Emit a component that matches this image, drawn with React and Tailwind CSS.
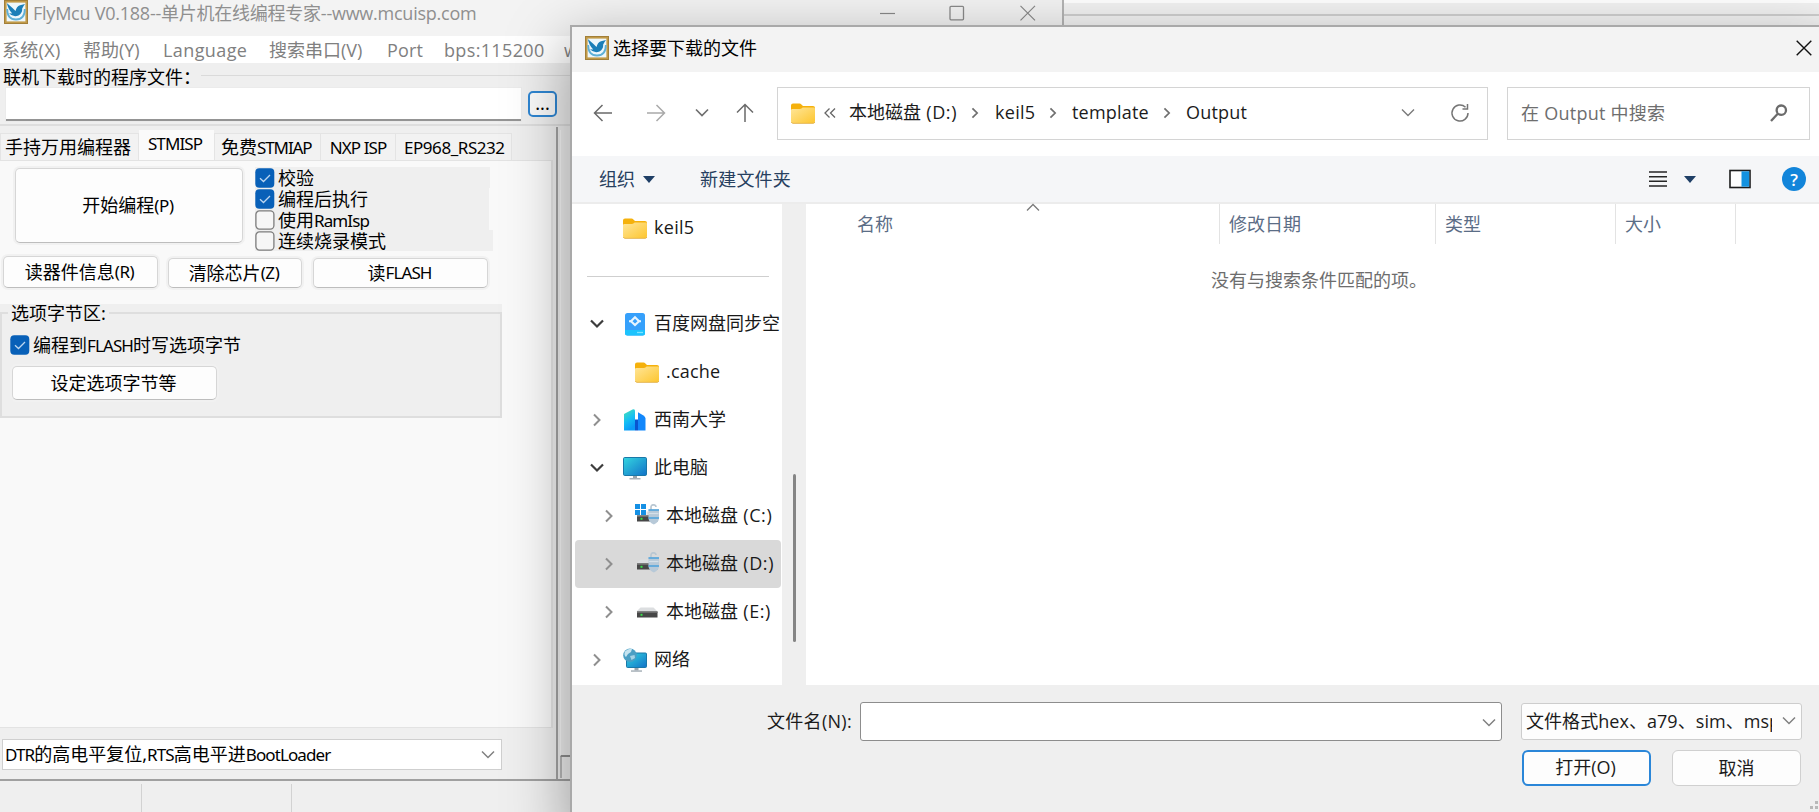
import React from "react";

const FONT = "font-['Open_Sans','Noto_Sans_CJK_SC',sans-serif]";
const FONT_OLD = "font-['Noto_Sans','Noto_Sans_CJK_SC',sans-serif]";

function BirdIcon({ className = "" }) {
  return (
    <svg viewBox="0 0 24 24" className={`h-6 w-6 shrink-0 ${className}`}>
      <rect width="24" height="24" fill="#a27f38" />
      <rect x="1" y="1" width="22" height="22" fill="#c19a48" />
      <rect x="2.6" y="2.6" width="18.8" height="18.8" fill="#eef7fb" />
      <path d="M2.800 3 L8.500 8 L11.500 11 Q12.500 6.500 16 5.200 L21 4 Q19 6.500 18.200 8.500 Q18.500 13 14.500 15.500 Q9 17.500 5 13.200 L8.200 13.400 Q4.200 9.500 2.800 3 Z" fill="#1b7fb8" />
      <path d="M3.200 9 Q3.200 19.500 12 19.500 Q20.800 19.500 20.800 9" fill="none" stroke="#5fb0d6" strokeWidth="1.800" />
    </svg>
  );
}

function FolderIcon() {
  return (
    <svg viewBox="0 0 24 21" className="h-[21px] w-6 shrink-0">
      <defs>
        <linearGradient id="folder" x1="0" y1="0" x2="1" y2="1">
          <stop offset="0" stopColor="#ffe69a" />
          <stop offset="1" stopColor="#fdc62f" />
        </linearGradient>
      </defs>
      <path d="M0 2.5 Q0 .6 2 .6 H8.5 Q9.6 .6 10.4 1.5 L12 3 H22 Q24 3 24 5 V12 H0 Z" fill="#f5b10c" />
      <path d="M0 7.2 Q0 6 1.4 6 H8.8 Q10 6 10.8 5.2 L11.6 4.4 H22.6 Q24 4.4 24 5.8 V18.2 Q24 20 22.2 20 H1.8 Q0 20 0 18.2 Z" fill="url(#folder)" />
      <path d="M.3 19 Q1 20.4 2 20.4 H22 Q23.4 20.4 23.8 19" stroke="#e0a82e" strokeWidth=".8" fill="none" />
    </svg>
  );
}

function BaiduIcon() {
  return (
    <svg viewBox="0 0 24 24" className="h-6 w-6 shrink-0">
      <rect x="2" y="1" width="20" height="22.5" rx="2.5" fill="#36a0fb" />
      <path d="M2 18 H22 V21 Q22 23.5 19.500 23.5 H4.500 Q2 23.500 2 21 Z" fill="#1cc3fd" />
      <path d="M14 20.500 H20" stroke="#7de4ff" strokeWidth="1.300" />
      <path d="M12 5.300 L16 9.200 L12 13.100 L8 9.200 Z" fill="none" stroke="#e8f5ff" strokeWidth="2.100" />
      <path d="M6 9.200 H8 M16 9.200 H18" stroke="#e8f5ff" strokeWidth="2" />
    </svg>
  );
}

function SchoolIcon() {
  return (
    <svg viewBox="0 0 24 24" className="h-6 w-6 shrink-0">
      <defs>
        <linearGradient id="school" x1="0" y1="0" x2="0.4" y2="1">
          <stop offset="0" stopColor="#4be3b4" />
          <stop offset=".6" stopColor="#14bdf5" />
          <stop offset="1" stopColor="#0b9bf8" />
        </linearGradient>
      </defs>
      <path d="M1 6 L9.500 1.500 Q12 .6 12 2.800 V22.500 H1 Z" fill="url(#school)" />
      <path d="M15 4.200 L20.500 7.500 Q22.500 8.800 22.500 10.500 V22.500 H15 Z" fill="#1287fb" />
      <rect x="12" y="11.500" width="3" height="11" fill="#0a55cf" />
    </svg>
  );
}

function ComputerIcon() {
  return (
    <svg viewBox="0 0 24 24" className="h-6 w-6 shrink-0">
      <defs>
        <linearGradient id="screen" x1="0" y1="0" x2="1" y2="1">
          <stop offset="0" stopColor="#34d6e0" />
          <stop offset="1" stopColor="#1272c8" />
        </linearGradient>
      </defs>
      <rect x=".5" y="1.500" width="23" height="18" rx="1.200" fill="url(#screen)" stroke="#1a78a8" />
      <rect x="10" y="20" width="4" height="2.500" fill="#9aa3ab" />
      <rect x="6.500" y="22" width="11" height="1.500" fill="#a9b2ba" />
    </svg>
  );
}

function NetworkIcon() {
  return (
    <svg viewBox="0 0 24 24" className="h-6 w-6 shrink-0">
      <rect x="3.500" y="5" width="20" height="14.500" rx="1" fill="url(#screen)" stroke="#1a78a8" />
      <rect x="11.500" y="20" width="4" height="2.500" fill="#9aa3ab" />
      <rect x="8" y="22.300" width="11" height="1.500" fill="#a9b2ba" />
      <circle cx="7" cy="7.200" r="6.800" fill="#4b9fc4" />
      <path d="M2 3.500 Q5 .3 9 1 L8 4 L5 6 L3 9 Q.5 7 2 3.500 Z" fill="#c6e4f0" />
      <path d="M7 8 L11.500 7 L12 10 L8.500 12 Z" fill="#a5d3e6" />
    </svg>
  );
}

function DriveIcon({ windows, locked }) {
  return (
    <svg viewBox="0 0 24 24" className="h-6 w-6 shrink-0">
      {windows && (
        <g fill="#1590e4">
          <rect x="0" y="0" width="5" height="5" />
          <rect x="6" y="0" width="5" height="5" />
          <rect x="0" y="6" width="5" height="5" />
          <rect x="6" y="6" width="5" height="5" />
        </g>
      )}
      {!windows && <path d="M5.500 7.500 H18.500 L22.500 11.500 H1.500 Z" fill="#dcdee0" />}
      {windows && <path d="M11.500 7.500 H18 L22 11.500 H11.500 Z" fill="#dcdee0" />}
      <rect x="2" y="11.500" width="20.500" height="6" fill="#474747" />
      <rect x="2" y="11.500" width="20.500" height="1.500" fill="#6b6b6b" />
      <rect x="5.500" y="13.800" width="2" height="2" fill="#37e04a" />
      {locked && (
        <g>
          <path d="M16 6 V3.500 Q16 .8 18.500 .8 Q21 .8 21 3" fill="none" stroke="#b9c7d2" strokeWidth="1.700" />
          <path d="M13.500 5.500 H24 V14 Q24 18 18.800 20.500 Q13.500 18 13.500 14 Z" fill="#b7c9d8" />
          <path d="M13.500 6 H24 M13.500 14 H24" stroke="#4ba1dc" strokeWidth="1.300" />
          <path d="M14 9.500 H23.500" stroke="#d5e0e9" strokeWidth="1.200" />
        </g>
      )}
    </svg>
  );
}

function Chevron({ dir = "down", w = 14, sw = 1.5, className = "" }) {
  const d = { down: "M1 3.5 L7 9.500 L13 3.500", up: "M1 9.500 L7 3.500 L13 9.500", right: "M4 1.500 L9.500 7 L4 12.500" }[dir];
  return (
    <svg viewBox="0 0 14 14" width={w} height={w} className={`shrink-0 ${className}`}>
      <path d={d} fill="none" stroke="currentColor" strokeWidth={sw} />
    </svg>
  );
}

function Check({ checked, children }) {
  return (
    <div className="flex h-[21px] items-center">
      {checked ? (
        <svg viewBox="0 0 20 20" className="h-5 w-5 shrink-0">
          <rect x=".3" y=".2" width="19" height="19.600" rx="4" fill="#0860b8" />
          <path d="M5 10.200 L8.500 13.500 L15 7" fill="none" stroke="#bcd6f0" strokeWidth="1.300" />
        </svg>
      ) : (
        <svg viewBox="0 0 20 20" className="h-5 w-5 shrink-0">
          <rect x=".9" y=".9" width="18" height="18.200" rx="3.500" fill="#f6f6f6" stroke="#7d7d7d" strokeWidth="1.300" />
        </svg>
      )}
      <span className="ml-[3px]">{children}</span>
    </div>
  );
}

function OldButton({ className, children }) {
  return (
    <div className={`flex shrink-0 items-center justify-center rounded-[5px] border border-[#d6d6d6] border-b-[#bdbdbd] bg-[#fdfdfd] pb-px pr-0.5 shadow-[0_0_0_2px_#f1f1f1] ${className}`}>
      {children}
    </div>
  );
}

function L({ t = "tracking-[-0.9px]", children }) {
  return <span className={`text-[17px] ${t}`}>{children}</span>;
}

function MainWindow() {
  return (
    <div className={`absolute left-0 top-0 flex h-[812px] w-[1064px] flex-col border-r-2 border-[#b4b4b4] bg-[#efefef] text-[18px] leading-none text-black ${FONT_OLD}`}>
      <div className={`flex h-9 shrink-0 items-start bg-[#f3f3f3] ${FONT}`}>
        <BirdIcon className="ml-1" />
        <span className="ml-[5px] mt-[4px] whitespace-nowrap tracking-[-0.24px] text-[#8f8f8f]">FlyMcu V0.188--单片机在线编程专家--www.mcuisp.com</span>
        <div className="ml-auto mr-[26px] flex h-[25px] items-center text-[#8a8a8a]">
          <svg viewBox="0 0 16 16" className="mr-[53px] h-4 w-4"><path d="M0 8.500 H15" stroke="currentColor" strokeWidth="1.200" /></svg>
          <svg viewBox="0 0 16 16" className="mr-[55px] h-4 w-4"><rect x="1" y="1.300" width="13.500" height="13.500" rx="1" fill="none" stroke="currentColor" strokeWidth="1.300" /></svg>
          <svg viewBox="0 0 16 16" className="h-4 w-4"><path d="M.5 .8 L15 15.300 M15 .8 L.5 15.300" stroke="currentColor" strokeWidth="1.200" /></svg>
        </div>
      </div>
      <div className={`flex h-[27px] shrink-0 items-center whitespace-nowrap bg-white pt-px text-[#808080] ${FONT}`}>
        <span className="ml-[2px] w-[81px] tracking-[0.3px]">系统(X)</span>
        <span className="w-[80px]">帮助(Y)</span>
        <span className="w-[106px] tracking-[0.4px]">Language</span>
        <span className="w-[118px]">搜索串口(V)</span>
        <span className="w-[57px] tracking-[0.2px]">Port</span>
        <span className="w-[120px] tracking-[0.35px]">bps:115200</span>
        <span className="w-[7px] overflow-hidden">w</span>
      </div>
      <div className="flex h-[63px] shrink-0 flex-col border-b-2 border-[#dedede]">
        <div className="flex h-[25px] items-center">
          <span className="ml-[3px] mt-[2px] whitespace-nowrap">联机下载时的程序文件：</span>
          <div className="mr-2 h-px flex-1 bg-[#dadada]" />
        </div>
        <div className="flex items-start">
          <div className="ml-1.5 h-[33px] w-[515px] border-b-2 border-[#949494] bg-white shadow-[0_0_0_1px_#ebebeb]" />
          <div className="ml-[7px] mt-[3px] flex h-[26px] w-[29px] items-center justify-center rounded-[5px] border-2 border-[#2f86d2] bg-[#fbfbfb] pb-0.5">...</div>
        </div>
      </div>
      <div className="flex h-[655px] shrink-0 border-b-2 border-[#a0a0a0]">
        <div className="flex w-[556px] shrink-0 flex-col">
          <div className="flex h-[34px] items-end whitespace-nowrap">
            <div className="flex h-[27px] w-[139px] items-center border border-b-0 border-[#e4e4e4] bg-[#f2f2f2] pl-1">手持万用编程器</div>
            <div className="flex h-[30px] w-[75px] items-center justify-center bg-[#fafafa] pb-[3px] pr-[3px]"><L>STMISP</L></div>
            <div className="flex h-[27px] w-[107px] items-center border border-b-0 border-[#e4e4e4] bg-[#f2f2f2] pl-[6px] pr-0">免费<L t="tracking-[-1.1px]">STMIAP</L></div>
            <div className="flex h-[27px] w-[75px] items-center justify-center border border-b-0 border-l-0 border-[#e4e4e4] bg-[#f2f2f2]"><L>NXP ISP</L></div>
            <div className="flex h-[27px] w-[116px] items-center border border-b-0 border-l-0 border-[#e4e4e4] bg-[#f2f2f2] pl-2"><L t="tracking-[-0.45px]">EP968_RS232</L></div>
          </div>
          <div className="flex h-[568px] w-[553px] flex-col border-b border-r-2 border-t border-[#e3e3e3] bg-[#f9f9f9]">
            <div className="mt-[7px] flex">
              <OldButton className="ml-[15px] h-[75px] w-[228px]">开始编程<L t="tracking-[-0.4px]">(P)</L></OldButton>
              <div className="-mt-[1px] ml-3 flex w-[238px] flex-col whitespace-nowrap">
                <div className="w-[235px] bg-[#efefef]"><Check checked>校验</Check></div>
                <div className="w-[234px] bg-[#efefef]"><Check checked>编程后执行</Check></div>
                <div className="w-[234px] bg-[#efefef]"><Check>使用<L>RamIsp</L></Check></div>
                <div className="w-[238px] bg-[#efefef]"><Check>连续烧录模式</Check></div>
              </div>
            </div>
            <div className="mt-[5px] flex items-end">
              <OldButton className="ml-[3px] h-8 w-[155px]">读器件信息<L t="tracking-[-0.4px]">(R)</L></OldButton>
              <OldButton className="ml-[10px] h-[30px] w-[134px]">清除芯片<L t="tracking-[-0.4px]">(Z)</L></OldButton>
              <OldButton className="ml-[11px] h-[30px] w-[175px]">读<L>FLASH</L></OldButton>
            </div>
            <div className="mt-[16px] flex h-[114px] w-[502px] flex-col bg-[#efefef]">
              <div className="flex h-[18px] shrink-0 items-center">
                <div className="h-0.5 w-2 bg-[#dedede]" />
                <span className="mx-[3px] whitespace-nowrap">选项字节区:</span>
                <div className="h-0.5 flex-1 bg-[#dedede]" />
              </div>
              <div className="-mt-[9px] flex flex-1 flex-col border-x-2 border-b-2 border-[#dedede] pt-[21px]">
                <div className="ml-2"><Check checked>编程到<L>FLASH</L>时写选项字节</Check></div>
                <OldButton className="ml-[10px] mt-[11px] h-[34px] w-[205px]">设定选项字节等</OldButton>
              </div>
            </div>
          </div>
          <div className="ml-[2px] mt-[11px] flex h-[31px] w-[500px] items-center justify-between whitespace-nowrap border border-[#cfcfcf] bg-white pl-[2px] pr-[6px]">
            <span className="mb-px"><L>DTR</L>的高电平复位,<L>RTS</L>高电平进<L>BootLoader</L></span>
            <Chevron className="text-[#808080]" />
          </div>
        </div>
        <div className="mt-px w-0.5 bg-[#a3a3a3]" />
        <div className="flex flex-1 flex-col pl-[2px]">
          <div className="mt-1 flex-1 border-b-2 border-l border-[#8f8f8f] border-l-[#fafafa]" />
          <div className="mb-px h-[21px] border-l-2 border-[#b9b9b9]" />
        </div>
      </div>
      <div className="flex flex-1 pt-[3px]">
        <div className="w-[142px] border-r border-[#d2d2d2]" />
        <div className="w-[150px] border-r border-[#d2d2d2]" />
      </div>
    </div>
  );
}

function TreeRow({ level = 1, open, leaf, selected, icon, children }) {
  return (
    <div className={`ml-[3px] flex h-12 w-[206px] shrink-0 items-center rounded-[4px] ${selected ? "bg-[#d9d9d9]" : ""} ${level === 2 ? "pl-[27px]" : "pl-[15px]"}`}>
      <span className="flex w-[14px] shrink-0">
        {!leaf && (open ? <Chevron sw={2.2} className="text-[#3d3d3d]" /> : <Chevron dir="right" sw={2} className="text-[#8f8f8f]" />)}
      </span>
      <span className="ml-[19px] flex">{icon}</span>
      <span className="mb-0.5 ml-[7px] whitespace-nowrap">{children}</span>
    </div>
  );
}

function Sidebar() {
  return (
    <div className="flex h-[481px] w-[234px] shrink-0 bg-[#efefef]">
      <div className="flex w-[210px] flex-col bg-white text-[#191919]">
        <TreeRow leaf icon={<FolderIcon />}><span className="tracking-[0.3px]">keil5</span></TreeRow>
        <div className="flex h-12 shrink-0 items-center pl-[15px]"><div className="h-px w-[182px] bg-[#cfcfcf]" /></div>
        <TreeRow open icon={<BaiduIcon />}>百度网盘同步空</TreeRow>
        <TreeRow level={2} leaf icon={<FolderIcon />}><span className="tracking-[0.2px]">.cache</span></TreeRow>
        <TreeRow icon={<SchoolIcon />}>西南大学</TreeRow>
        <TreeRow open icon={<ComputerIcon />}>此电脑</TreeRow>
        <TreeRow level={2} icon={<DriveIcon windows locked />}>本地磁盘<span className="tracking-[0.6px]"> (C:)</span></TreeRow>
        <TreeRow level={2} selected icon={<DriveIcon locked />}>本地磁盘<span className="tracking-[0.6px]"> (D:)</span></TreeRow>
        <TreeRow level={2} icon={<DriveIcon />}>本地磁盘<span className="tracking-[0.6px]"> (E:)</span></TreeRow>
        <TreeRow icon={<NetworkIcon />}>网络</TreeRow>
      </div>
      <div className="flex flex-1 justify-center pt-[270px]">
        <div className="h-[168px] w-[3px] rounded-full bg-[#858585]" />
      </div>
    </div>
  );
}

function Crumb({ className, children }) {
  return <span className={`mb-0.5 shrink-0 whitespace-nowrap ${className}`}>{children}</span>;
}

function Dialog() {
  return (
    <div className={`absolute left-[570px] top-[25px] flex h-[800px] w-[1260px] flex-col border-l-2 border-t-2 border-[#a9a9a9] bg-[#efefef] text-[18px] leading-none text-[#1b1b1b] shadow-[0_20px_56px_4px_rgba(0,0,0,0.34)] ${FONT}`}>
      <div className="flex h-[45px] w-[1247px] shrink-0 items-center bg-[#f3f3f3] pb-[3px]">
        <BirdIcon className="ml-[13px]" />
        <span className="ml-[4px] text-black">选择要下载的文件</span>
        <svg viewBox="0 0 16 16" className="ml-auto mr-[7px] h-4 w-4"><path d="M.7 .7 L15.300 15.300 M15.300 .7 L.7 15.300" stroke="#111" strokeWidth="1.400" /></svg>
      </div>
      <div className="flex h-[84px] w-[1247px] shrink-0 items-center bg-white pb-[2px]">
        <svg viewBox="0 0 20 20" className="ml-[21px] h-5 w-5" fill="none" stroke="#6a6a6a" strokeWidth="1.500"><path d="M19 10 H2 M9.500 2 L1.500 10 L9.500 18" /></svg>
        <svg viewBox="0 0 20 20" className="ml-[33px] h-5 w-5" fill="none" stroke="#a9a9a9" strokeWidth="1.500"><path d="M1 10 H18 M10.500 2 L18.500 10 L10.500 18" /></svg>
        <Chevron sw={1.7} className="ml-[29px] text-[#6f6f6f]" />
        <svg viewBox="0 0 20 20" className="ml-[26px] h-5 w-5" fill="none" stroke="#6a6a6a" strokeWidth="1.500"><path d="M10 19 V2 M2 9.500 L10 1.500 L18 9.500" /></svg>
        <div className="ml-[22px] flex h-[53px] w-[711px] items-center border border-[#d4d4d4]">
          <span className="ml-[13px]"><FolderIcon /></span>
          <svg viewBox="0 0 14 14" className="ml-[8px] h-3.5 w-3.5" fill="none" stroke="#666" strokeWidth="1.300"><path d="M6.500 2.500 L2 7 L6.500 11.500 M12 2.500 L7.500 7 L12 11.500" /></svg>
          <Crumb className="ml-[12px] w-[120px]">本地磁盘<span className="tracking-[0.6px]"> (D:)</span></Crumb>
          <Chevron dir="right" w={12} sw={2} className="text-[#6f6f6f]" />
          <Crumb className="ml-[14px] w-[52px] tracking-[0.3px]">keil5</Crumb>
          <Chevron dir="right" w={12} sw={2} className="text-[#6f6f6f]" />
          <Crumb className="ml-[13px] w-[89px] tracking-[0.2px]">template</Crumb>
          <Chevron dir="right" w={12} sw={2} className="text-[#6f6f6f]" />
          <Crumb className="ml-[13px] tracking-[0.2px]">Output</Crumb>
          <Chevron sw={1.4} className="ml-auto text-[#7a7a7a]" />
          <svg viewBox="0 0 20 20" className="ml-[35px] mr-[17px] h-5 w-5" fill="none" stroke="#757575" strokeWidth="1.500"><path d="M18 10 A8 8 0 1 1 15.500 4.200 M17.500 1 V6 H12.500" /></svg>
        </div>
        <div className="ml-[19px] flex h-[53px] w-[303px] items-center border border-[#d4d4d4] text-[#6e6e6e]">
          <span className="ml-[13px] whitespace-nowrap tracking-[0.25px]">在 Output 中搜索</span>
          <svg viewBox="0 0 18 18" className="ml-auto mr-[21px] h-[18px] w-[18px]" fill="none" stroke="#6b6b6b" strokeWidth="2.300"><circle cx="11.300" cy="6.200" r="4.700" /><path d="M8 9.500 L1 17" /></svg>
        </div>
      </div>
      <div className="flex h-[48px] w-[1247px] shrink-0 items-center border-b-2 border-[#ececec] bg-[#f5f6f8] text-[#27405f]">
        <span className="ml-[27px]">组织</span>
        <svg viewBox="0 0 12 7" className="ml-2 h-[7px] w-3"><path d="M0 0 H12 L6 7 Z" fill="#1f3f66" /></svg>
        <span className="ml-[45px] tracking-[0.2px]">新建文件夹</span>
        <svg viewBox="0 0 20 18" className="ml-auto h-[18px] w-5" stroke="#262626" strokeWidth="1.500"><path d="M1 2 H19 M1 6.700 H19 M1 11.300 H19 M1 16 H19" /></svg>
        <svg viewBox="0 0 12 7" className="ml-[16px] h-[7px] w-3"><path d="M0 0 H12 L6 7 Z" fill="#1f3f66" /></svg>
        <svg viewBox="0 0 22 20" className="ml-[33px] h-5 w-[22px]"><rect x="1" y="1.500" width="20" height="17" fill="#fdfdfd" stroke="#1c1c1c" strokeWidth="1.600" /><rect x="12.500" y="2.300" width="7.700" height="15.400" fill="#1492e0" /></svg>
        <span className="ml-[31px] mr-[13px] flex h-6 w-6 items-center justify-center rounded-full bg-[#1285da] text-[17px] font-semibold text-white">?</span>
      </div>
      <div className="flex h-[481px] w-[1247px] shrink-0">
        <Sidebar />
        <div className="flex flex-1 flex-col bg-white">
          <div className="flex h-10 items-center text-[#5b6d86]">
            <div className="flex h-10 w-[414px] items-center border-r border-[#e3e3e3] pl-[51px]">
              <span>名称</span>
              <Chevron dir="up" sw={1.3} className="mb-auto ml-[133px] -mt-[3px] text-[#7b7b7b]" />
            </div>
            <div className="flex h-10 w-[216px] items-center border-r border-[#e3e3e3] pl-[9px]">修改日期</div>
            <div className="flex h-10 w-[180px] items-center border-r border-[#e3e3e3] pl-[9px]">类型</div>
            <div className="flex h-10 w-[120px] items-center border-r border-[#e3e3e3] pl-[9px]">大小</div>
          </div>
          <div className="mt-[27px] pl-[405px] text-[#6d6d6d]">没有与搜索条件匹配的项。</div>
        </div>
      </div>
      <div className="flex h-[127px] w-[1247px] shrink-0 flex-col">
        <div className="mt-[17px] flex h-[38px] shrink-0 items-center whitespace-nowrap">
          <span className="ml-[195px] w-[93px] tracking-[0.3px]">文件名(N):</span>
          <div className="flex h-[39px] w-[642px] items-center justify-end rounded-[3px] border border-[#8d8d8d] bg-white pr-[5px]">
            <Chevron className="mt-1 text-[#808080]" />
          </div>
          <div className="ml-[19px] flex h-[37px] w-[281px] items-center justify-between rounded-[3px] border border-[#cdcdcd] bg-[#fdfdfd] pl-[4px] pr-[5px]">
            <span className="w-[246px] overflow-hidden py-1 tracking-[0.05px]">文件格式hex、a79、sim、msp</span>
            <Chevron className="text-[#808080]" />
          </div>
        </div>
        <div className="mt-[10px] flex shrink-0">
          <div className="ml-[950px] flex h-[36px] w-[129px] items-center justify-center rounded-[6px] border-2 border-[#2a86d8] bg-[#fdfdfd] pb-0.5 pr-0.5">打开(O)</div>
          <div className="ml-[21px] flex h-[36px] w-[129px] items-center justify-center rounded-[6px] border border-[#d0d0d0] bg-[#fdfdfd] pb-px">取消</div>
        </div>
        <svg viewBox="0 0 9 9" className="ml-auto mt-[15px] h-[9px] w-[9px] shrink-0" fill="#b8b8b8"><rect x="5" y="0" width="3" height="3" /><rect x="5" y="5" width="3" height="3" /><rect x="0" y="5" width="3" height="3" /></svg>
      </div>
    </div>
  );
}

export default function App() {
  return (
    <div className="relative h-[812px] w-[1819px] overflow-hidden bg-[#f3f3f3]">
      <div className="flex h-full flex-col">
        <div className="h-[3px] bg-white" />
        <div className="h-[11px] bg-[#f2f2f2]" />
        <div className="h-0.5 bg-[#cfcfcf]" />
      </div>
      <MainWindow />
      <Dialog />
    </div>
  );
}
